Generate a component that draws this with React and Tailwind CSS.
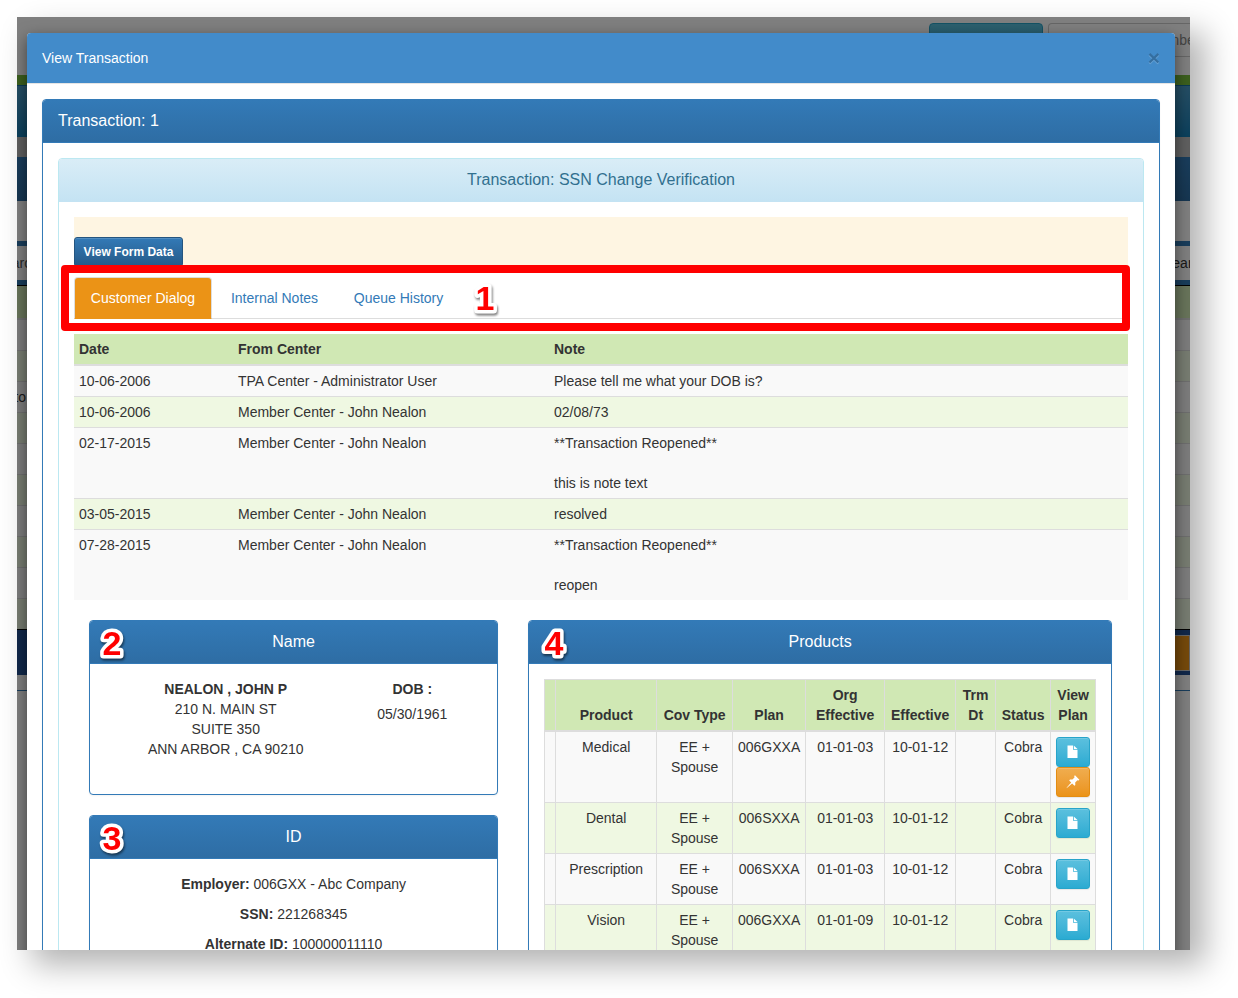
// Transaction viewer: modal over the dimmed queue page, with numbered callouts.

const NOTES = [
  { date: '10-06-2006', from: 'TPA Center - Administrator User', lines: ['Please tell me what your DOB is?'] },
  { date: '10-06-2006', from: 'Member Center - John Nealon', lines: ['02/08/73'] },
  { date: '02-17-2015', from: 'Member Center - John Nealon', lines: ['**Transaction Reopened**', '', 'this is note text'] },
  { date: '03-05-2015', from: 'Member Center - John Nealon', lines: ['resolved'] },
  { date: '07-28-2015', from: 'Member Center - John Nealon', lines: ['**Transaction Reopened**', '', 'reopen'] },
];

const PRODUCTS = [
  { name: 'Medical', cov: 'EE + Spouse', plan: '006GXXA', org: '01-01-03', eff: '10-01-12', status: 'Cobra', pinned: true },
  { name: 'Dental', cov: 'EE + Spouse', plan: '006SXXA', org: '01-01-03', eff: '10-01-12', status: 'Cobra' },
  { name: 'Prescription', cov: 'EE + Spouse', plan: '006SXXA', org: '01-01-03', eff: '10-01-12', status: 'Cobra' },
  { name: 'Vision', cov: 'EE + Spouse', plan: '006GXXA', org: '01-01-09', eff: '10-01-12', status: 'Cobra' },
];

const PRODUCT_HEADS = ['', 'Product', 'Cov Type', 'Plan', 'Org Effective', 'Effective', 'Trm Dt', 'Status', 'View Plan'];

const TABS = [
  { label: 'Customer Dialog', width: 'w-[138px]', active: true },
  { label: 'Internal Notes', width: 'w-[121px]' },
  { label: 'Queue History', width: 'w-[123px]' },
];

const QUEUE_ROWS = ['', '', 'to', '', '', '', '', '', '', ''];

export default function App() {
  return (
    <div className="h-screen overflow-hidden bg-white pt-[17px] pr-12 pb-12 pl-[17px] font-['Liberation_Sans',Arial,sans-serif] text-sm leading-5 text-[#333]">
      <div className="relative h-full overflow-hidden bg-white shadow-[15px_15px_30px_rgba(0,0,0,0.3)]">
        <QueuePage />
        <div className="absolute inset-0 bg-black/50" />
        <TransactionModal />
      </div>
    </div>
  );
}

// The page underneath; only its edges show.
function QueuePage() {
  return (
    <div aria-hidden="true">
      <div className="flex h-[58px] items-start justify-end gap-[5px] pt-[6px]">
        <button className="h-[34px] w-[114px] rounded border border-[#28a4c9] bg-linear-to-b from-[#5bc0de] to-[#2aabd2]" />
        <input
          className="h-[34px] w-[142px] rounded-l border border-r-0 border-[#ccc] pl-2 placeholder:text-[#888]"
          placeholder="Enter Member Number"
          tabIndex={-1}
        />
      </div>
      <div className="h-[10px] bg-[#78bf3c]" />
      <div className="h-[52px] border-t border-[#1573a8] bg-linear-to-b from-[#4a9cc8] to-[#1480b8]" />
      <div className="h-5 bg-[#bebebe]" />
      <div className="h-11 bg-linear-to-b from-[#337ab7] to-[#2d6ca2]" />
      <div className="h-10" />
      <div className="flex h-11 items-stretch justify-between border-y-[5px] border-[#337ab7] text-[#555]">
        <div className="flex w-[22px] items-center justify-end">Search</div>
        <div className="flex w-[27px] items-center text-[#333]">Search</div>
      </div>
      <div className="h-[35px] border-t border-b-2 border-t-black border-b-[#ddd] bg-[#d0e8b4]" />
      {QUEUE_ROWS.map((text, i) => (
        <div
          key={i}
          className={`flex h-[31px] items-center border-b border-[#ddd] ${i % 2 ? 'bg-[#eff8e2]' : 'bg-[#f9f9f9]'}`}
        >
          <div className="flex w-[9px] justify-end">{text}</div>
        </div>
      ))}
      <div className="-mt-px flex h-[46px] items-center justify-end border-t border-black bg-[#225094]">
        <div className="h-9 w-12 border border-[#ccc] bg-[#eb9316]" />
      </div>
      <div className="h-4 border-b border-[#337ab7]" />
    </div>
  );
}

function TransactionModal() {
  return (
    <div
      role="dialog"
      aria-label="View Transaction"
      className="absolute top-4 right-[15px] left-[10px] rounded bg-white shadow-[0_5px_15px_rgba(0,0,0,0.5)]"
    >
      <div className="flex h-[51px] items-center justify-between rounded-t border-b border-[#e5e5e5] bg-[#428bca] px-[15px] text-white">
        <h1>View Transaction</h1>
        <button
          aria-label="Close"
          className="text-[21px] leading-5 font-bold text-black opacity-20 [text-shadow:0_1px_0_#fff]"
        >
          ×
        </button>
      </div>

      <div className="p-[15px]">
        <Panel title="Transaction: 1" align="text-left">
          <section className="rounded border border-[#bce8f1]">
            <h2 className="rounded-t-[3px] border-b border-[#c4e3f3] bg-linear-to-b from-[#d9edf7] to-[#c4e3f3] px-[15px] py-3 text-center text-base leading-[18px] text-[#31708f]">
              Transaction: SSN Change Verification
            </h2>
            <div className="p-[15px]">
              <div className="mb-[10px] flex bg-[#fef5e2] pt-5">
                <button className="h-[30px] w-[109px] rounded-[3px] border border-[#245580] bg-linear-to-b from-[#337ab7] to-[#265a88] text-xs font-bold whitespace-nowrap text-white shadow-[inset_0_1px_0_rgba(255,255,255,0.15)]">
                  View Form Data
                </button>
              </div>
              <Tabs />
              <NotesTable />
              <div className="mt-5 grid grid-cols-[5fr_7fr]">
                <div className="min-w-0 space-y-5 px-[15px]">
                  <NamePanel />
                  <IdPanel />
                </div>
                <div className="min-w-0 pr-4 pl-[15px]">
                  <ProductsPanel />
                </div>
              </div>
            </div>
          </section>
        </Panel>
      </div>
    </div>
  );
}

function Panel({ title, align = 'text-center', callout, children }) {
  return (
    <section className="rounded border border-[#337ab7] bg-white shadow-[0_1px_2px_rgba(0,0,0,0.05)]">
      <h2
        className={`relative rounded-t-[3px] border-b border-[#337ab7] bg-linear-to-b from-[#337ab7] to-[#2e6da4] px-[15px] py-3 text-base leading-[18px] text-white ${align}`}
      >
        {title}
        {callout}
      </h2>
      <div className="p-[15px]">{children}</div>
    </section>
  );
}

// Red numeral with a thick, rounded white outline
function Callout({ n, place }) {
  return (
    <svg
      width="28"
      height="36"
      className={`absolute text-[34px] font-bold drop-shadow-[1px_2px_1px_rgba(0,0,0,0.5)] ${place}`}
    >
      <text
        x="14"
        y="30"
        textAnchor="middle"
        fill="#f00"
        stroke="#fff"
        strokeWidth="7"
        strokeLinejoin="round"
        paintOrder="stroke"
      >
        {n}
      </text>
    </svg>
  );
}

function Tabs() {
  return (
    <div className="relative mb-[15px]">
      <ul className="flex h-[42px] gap-[2px] border-b border-[#ddd]">
        {TABS.map(tab => (
          <li key={tab.label} className="h-[42px]">
            <a
              href="#"
              className={`flex h-full items-center justify-center rounded-t border ${tab.width} ${
                tab.active
                  ? 'border-[#ddd] border-b-transparent bg-[#eb9316] text-white'
                  : 'border-transparent text-[#337ab7]'
              }`}
            >
              {tab.label}
            </a>
          </li>
        ))}
      </ul>
      <div className="pointer-events-none absolute -inset-y-3 right-[-2px] left-[-13px] rounded border-8 border-[#f00]" />
      <Callout n="1" place="top-[3px] left-[397px]" />
    </div>
  );
}

function NotesTable() {
  return (
    <table className="w-full table-fixed border-separate border-spacing-0 text-left">
      <colgroup>
        <col className="w-[159px]" />
        <col className="w-[316px]" />
        <col />
      </colgroup>
      <thead>
        <tr className="bg-[#d0e8b4]">
          {['Date', 'From Center', 'Note'].map(head => (
            <th key={head} className="border-b-2 border-[#ddd] p-[5px] font-bold">{head}</th>
          ))}
        </tr>
      </thead>
      <tbody className="align-top">
        {NOTES.map((note, i) => {
          const cell = `p-[5px] border-[#ddd] ${i > 0 ? 'border-t' : ''}`;
          return (
            <tr key={i} className={i % 2 ? 'bg-[#eff8e2]' : 'bg-[#f9f9f9]'}>
              <td className={cell}>{note.date}</td>
              <td className={cell}>{note.from}</td>
              <td className={cell}>
                {note.lines.map((line, j) => (
                  <div key={j} className="min-h-5">{line}</div>
                ))}
              </td>
            </tr>
          );
        })}
      </tbody>
    </table>
  );
}

function NamePanel() {
  return (
    <Panel title="Name" callout={<Callout n="2" place="top-1 left-2" />}>
      <div className="-mx-[15px] grid grid-cols-12 pb-5 text-center">
        <div className="col-span-8">
          <div className="font-bold">NEALON , JOHN P</div>
          <div>210 N. MAIN ST</div>
          <div>SUITE 350</div>
          <div>ANN ARBOR , CA 90210</div>
        </div>
        <div className="col-span-3">
          <div className="mb-[5px] font-bold">DOB :</div>
          <div>05/30/1961</div>
        </div>
      </div>
    </Panel>
  );
}

function IdPanel() {
  return (
    <Panel title="ID" callout={<Callout n="3" place="top-1 left-2" />}>
      <div className="space-y-[10px] pb-5 text-center">
        <p><b>Employer:</b> 006GXX - Abc Company</p>
        <p><b>SSN:</b> 221268345</p>
        <p><b>Alternate ID:</b> 100000011110</p>
      </div>
    </Panel>
  );
}

function ProductsPanel() {
  const cell = 'border-r border-b border-[#ddd] p-[5px]';
  return (
    <Panel title="Products" callout={<Callout n="4" place="top-1 left-[11px]" />}>
      <table className="w-full table-fixed border-separate border-spacing-0 border-t border-l border-[#ddd] text-center">
        <colgroup>
          <col className="w-[11px]" />
          <col className="w-[101px]" />
          <col className="w-[76px]" />
          <col className="w-[73px]" />
          <col className="w-[79px]" />
          <col className="w-[71px]" />
          <col className="w-[40px]" />
          <col className="w-[55px]" />
          <col className="w-[45px]" />
        </colgroup>
        <thead>
          <tr className="bg-[#d0e8b4] align-bottom">
            {PRODUCT_HEADS.map(head => (
              <th key={head} className="border-r border-b-2 border-[#ddd] px-0 py-[5px] font-bold">{head}</th>
            ))}
          </tr>
        </thead>
        <tbody className="align-top">
          {PRODUCTS.map((product, i) => (
            <tr key={product.name} className={i % 2 ? 'bg-[#eff8e2]' : 'bg-[#f9f9f9]'}>
              <td className="border-r border-b border-[#ddd]" />
              <td className={cell}>{product.name}</td>
              <td className={cell}>{product.cov}</td>
              <td className="border-r border-b border-[#ddd] py-[5px]">{product.plan}</td>
              <td className={cell}>{product.org}</td>
              <td className={cell}>{product.eff}</td>
              <td className={cell} />
              <td className={cell}>{product.status}</td>
              <td className={cell}>
                <button
                  aria-label={`View ${product.name} plan`}
                  className="flex h-[30px] w-[34px] items-center justify-center rounded-[3px] border border-[#28a4c9] bg-linear-to-b from-[#5bc0de] to-[#2aabd2] text-white shadow-[inset_0_1px_0_rgba(255,255,255,0.15),0_1px_1px_rgba(0,0,0,0.075)]"
                >
                  <FileIcon />
                </button>
                {product.pinned && (
                  <button
                    aria-label={`Pin ${product.name} plan`}
                    className="flex h-[30px] w-[34px] items-center justify-center rounded-[3px] border border-[#e38d13] bg-linear-to-b from-[#f0ad4e] to-[#eb9316] text-white shadow-[inset_0_1px_0_rgba(255,255,255,0.15),0_1px_1px_rgba(0,0,0,0.075)]"
                  >
                    <PushpinIcon />
                  </button>
                )}
              </td>
            </tr>
          ))}
        </tbody>
      </table>
    </Panel>
  );
}

function FileIcon() {
  return (
    <svg width="12" height="14" viewBox="0 0 12 14" fill="currentColor" aria-hidden="true">
      <path d="M.5.5H6V4.8H10.5V13H.5Z" />
      <path d="M6.8.5 10.5 4H6.8Z" />
    </svg>
  );
}

function PushpinIcon() {
  return (
    <svg width="14" height="14" viewBox="0 0 14 14" fill="currentColor" aria-hidden="true">
      <path d="M9 .3 13.4 4.7 12.6 5.5 11.4 5.2 9.2 7.4 9.3 10 8.5 10.8 6.1 8.4 1.4 12.6.4 13.2 1 12.2 5.2 7.5 3.2 5.4 4 4.6 6.4 4.6 8.5 2.4 8.2 1.1Z" />
    </svg>
  );
}
